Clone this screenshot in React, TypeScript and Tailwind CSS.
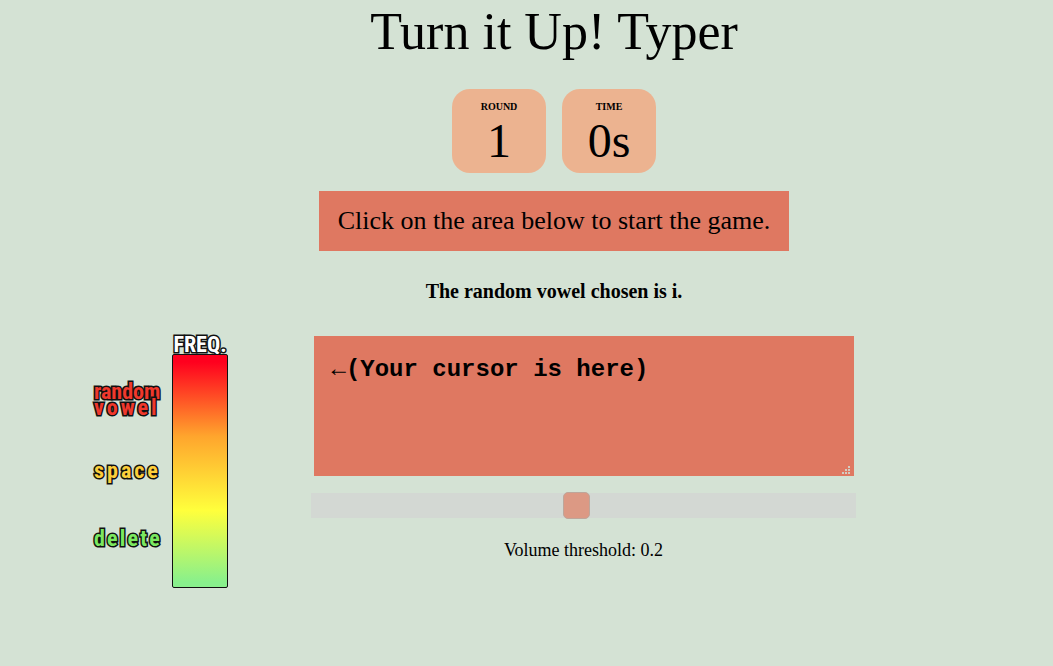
import { useState } from "react";

const strokeText =
  "[-webkit-text-stroke:3px_#111] [paint-order:stroke_fill] font-['Roboto_Condensed','Liberation_Sans_Narrow','DejaVu_Sans_Condensed',sans-serif] font-bold";

function Stat({ label, value }: { label: string; value: string }) {
  return (
    <div className="flex h-21 w-[94px] flex-col items-center rounded-[18px] bg-[#ecb390] pt-3">
      <h2 className="text-[10px] leading-3 font-bold uppercase">{label}</h2>
      <p className="text-5xl leading-14">{value}</p>
    </div>
  );
}

function FrequencyMeter() {
  return (
    <div className="flex shrink-0 gap-2">
      <div className={`${strokeText} flex w-[71px] flex-col items-start pt-12 pl-px text-[22px]`}>
        <div className="flex flex-col items-start leading-4 text-[#f0382c]">
          <span>random</span>
          <span className="tracking-[3px]">vowel</span>
        </div>
        <span className="mt-[43px] leading-6 tracking-[3px] text-[#fdce3a]">space</span>
        <span className="mt-11 leading-6 tracking-widest text-[#7be860]">delete</span>
      </div>
      <div className="flex w-14 flex-col items-center">
        <span className={`${strokeText} text-[22px] leading-[18px] text-white`}>FREQ.</span>
        <div className="h-[234px] w-full rounded-[2px] border border-[#111] bg-[linear-gradient(to_bottom,#ff001e_3%,#ffa52d_35%,#ffff3c_67%,#88f08c_98%)]" />
      </div>
    </div>
  );
}

function ResizeDots() {
  return (
    <svg
      className="pointer-events-none absolute right-1 bottom-0.5 size-2 fill-[#d3cdc2]"
      viewBox="0 0 8 8"
      aria-hidden="true"
    >
      <path d="M6 0h2v2H6zM3 3h2v2H3zM6 3h2v2H6zM0 6h2v2H0zM3 6h2v2H3zM6 6h2v2H6z" />
    </svg>
  );
}

export default function App() {
  const [text, setText] = useState("←(Your cursor is here)");
  const [threshold, setThreshold] = useState(0.2);

  return (
    <main className="min-h-screen bg-[#d4e2d4] pb-10 font-['Liberation_Serif',serif] text-black">
      <header className="flex flex-col items-center pl-[55px]">
        <h1 className="pt-0.5 text-[52px] leading-15">Turn it Up! Typer</h1>
        <div className="mt-[27px] flex gap-4">
          <Stat label="Round" value="1" />
          <Stat label="Time" value="0s" />
        </div>
        <p className="mt-[18px] bg-[#df7861] px-[19px] py-3 text-[26px] leading-9">
          Click on the area below to start the game.
        </p>
        <p className="mt-7 text-xl leading-6 font-bold">The random vowel chosen is i.</p>
      </header>

      <section className="mt-[33px] flex justify-center gap-[83px] pr-[104px]">
        <FrequencyMeter />
        <div className="flex w-[545px] flex-col items-center">
          <div className="relative flex">
            <textarea
              aria-label="Typing area"
              value={text}
              onChange={(e) => setText(e.target.value)}
              className="h-35 w-[540px] resize bg-[#df7861] px-[18px] py-5 font-['Liberation_Mono',monospace] text-2xl leading-7 font-bold outline-none [&::-webkit-resizer]:bg-transparent"
            />
            <ResizeDots />
          </div>
          <input
            id="threshold"
            type="range"
            min="0.01"
            max="0.4"
            step="0.01"
            value={threshold}
            onChange={(e) => setThreshold(Number(e.target.value))}
            className="mt-[17px] h-[25px] w-full appearance-none bg-[#d3d8d3] outline-none [&::-webkit-slider-thumb]:h-[27px] [&::-webkit-slider-thumb]:w-[27px] [&::-webkit-slider-thumb]:appearance-none [&::-webkit-slider-thumb]:rounded-[5px] [&::-webkit-slider-thumb]:border [&::-webkit-slider-thumb]:border-[#bea69a] [&::-webkit-slider-thumb]:bg-[#dc9984]"
          />
          <label htmlFor="threshold" className="mt-5 text-[18px] leading-6">
            Volume threshold: {threshold}
          </label>
        </div>
      </section>
    </main>
  );
}
